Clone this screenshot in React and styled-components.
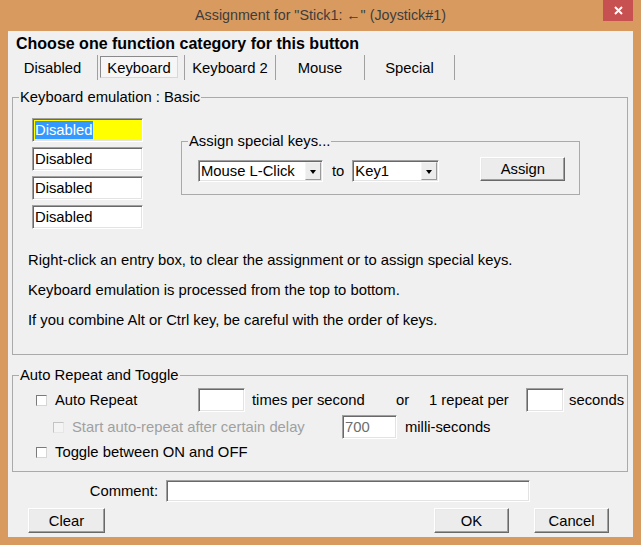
import React from "react";
import styled, { createGlobalStyle, css } from "styled-components";

const FONT = `"Liberation Sans", Arial, sans-serif`;

const GlobalStyle = createGlobalStyle`
  html, body { margin: 0; padding: 0; background: #d99a60; }
  * { box-sizing: border-box; }
`;

const sunken = css`
  border: 1px solid;
  border-color: #a0a0a0 #ffffff #ffffff #a0a0a0;
  box-shadow: inset 1px 1px 0 #696969, inset -1px -1px 0 #e3e3e3;
`;

const raised = css`
  border: 1px solid;
  border-color: #ffffff #696969 #696969 #ffffff;
  box-shadow: inset -1px -1px 0 #a0a0a0, inset 1px 1px 0 #e8e8e8;
  background: #ececec;
`;

const Window = styled.div`
  width: 641px;
  height: 545px;
  background: #d99a60;
  display: flex;
  flex-direction: column;
  padding: 0 8px 8px;
  font-family: ${FONT};
  font-size: 14.8px;
  color: #000;
`;

const TitleBar = styled.div`
  height: 31px;
  display: grid;
  grid-template-columns: 1fr auto 1fr;
  align-items: start;
`;

const Title = styled.div`
  grid-column: 2;
  line-height: 31px;
  font-size: 14.3px;
  color: #3d3d3d;
  white-space: nowrap;
`;

const CloseButton = styled.div`
  grid-column: 3;
  justify-self: end;
  width: 30px;
  height: 21px;
  background: #c75050;
  display: flex;
  align-items: center;
  justify-content: center;
`;

const Content = styled.div`
  flex: 1;
  background: #f0f0f0;
  display: flex;
  flex-direction: column;
`;

const Heading = styled.div`
  padding: 4px 0 0 8px;
  font-weight: bold;
  font-size: 16px;
  line-height: 18px;
`;

const TabRow = styled.div`
  margin-top: 2px;
  display: flex;
  height: 25px;
`;

const Tab = styled.div`
  width: ${(p) => p.$w}px;
  height: 25px;
  border-right: 1px solid #a0a0a0;
  display: flex;
  align-items: ${(p) => (p.$active ? "flex-start" : "center")};
  justify-content: ${(p) => (p.$active ? "flex-start" : "center")};
`;

const TabBox = styled.div`
  margin: 1px 0 0 2px;
  width: 78px;
  height: 22px;
  display: flex;
  align-items: center;
  justify-content: center;
  border: 1px solid;
  border-color: #8a8a8a #d8d8d8 #d8d8d8 #8a8a8a;
  background: #f6f6f6;
  padding-top: 2px;
`;

const Group = styled.fieldset`
  margin: 0;
  padding: 0;
  min-width: 0;
  border: 1px solid #aaaaaa;
`;

const Legend = styled.legend`
  padding: 0 1px;
  margin-left: 6px;
  line-height: 16px;
  font-size: 14.8px;
`;

const KeyboardGroup = styled(Group)`
  margin: 9px 5px 0 4px;
  height: 266px;
`;

const GroupBody = styled.div`
  padding: 13px 0 0 15px;
`;

const TopRow = styled.div`
  display: flex;
  align-items: flex-start;
`;

const EntryColumn = styled.div`
  margin-left: 4px;
  width: 111px;
  display: flex;
  flex-direction: column;
  gap: 5px;
`;

const EntryBox = styled.div`
  ${sunken};
  height: 24px;
  background: ${(p) => (p.$highlight ? "#ffff00" : "#ffffff")};
  display: flex;
  align-items: center;
  padding-left: 2px;
`;

const Selected = styled.span`
  background: #3399ff;
  color: #fff;
  line-height: 18px;
`;

const SpecialGroup = styled(Group)`
  margin: 15px 0 0 38px;
  width: 399px;
  height: 62px;
`;

const SpecialRow = styled.div`
  display: flex;
  align-items: flex-start;
  padding: 8px 0 0 16px;
`;

const Combo = styled.div`
  ${sunken};
  margin-top: 3px;
  width: ${(p) => p.$w}px;
  height: 22px;
  background: #fff;
  display: flex;
  align-items: center;
  justify-content: space-between;
  padding: 0 1px 0 2px;
`;

const ComboButton = styled.div`
  width: 16px;
  height: 18px;
  border: 1px solid;
  border-color: #f4f4f4 #9a9a9a #9a9a9a #f4f4f4;
  background: #ececec;
  display: flex;
  align-items: center;
  justify-content: center;
`;

const Arrow = styled.span`
  width: 0;
  height: 0;
  border-left: 3.5px solid transparent;
  border-right: 3.5px solid transparent;
  border-top: 4px solid #000;
  margin-top: 1px;
`;

const ToLabel = styled.span`
  margin: 3px 8px 0 9px;
  line-height: 22px;
`;

const Button = styled.div`
  ${raised};
  width: ${(p) => p.$w}px;
  height: ${(p) => p.$h || 24}px;
  display: flex;
  align-items: center;
  justify-content: center;
`;

const AssignButton = styled(Button)`
  margin-left: 41px;
`;

const Info = styled.div`
  margin-top: 16px;
`;

const InfoLine = styled.div`
  line-height: 30px;
`;

const AutoGroup = styled(Group)`
  margin: 12px 5px 0 4px;
  height: 105px;
`;

const AutoBody = styled.div`
  padding-left: 23px;
`;

const Row = styled.div`
  display: flex;
  align-items: center;
  height: ${(p) => p.$h}px;
  margin-top: ${(p) => p.$mt}px;
`;

const CheckCell = styled.div`
  display: flex;
  align-items: center;
  gap: 8px;
  width: ${(p) => (p.$w ? `${p.$w}px` : "auto")};
  margin-left: ${(p) => p.$ml || 0}px;
  color: ${(p) => (p.$disabled ? "#a0a0a0" : "#000")};
`;

const CheckBox = styled.span`
  width: 11px;
  height: 11px;
  flex: none;
  border: 1px solid;
  border-color: ${(p) =>
    p.$disabled ? "#c4c4c4 #e6e6e6 #e6e6e6 #c4c4c4" : "#7a7a7a #d6d6d6 #d6d6d6 #7a7a7a"};
  background: ${(p) => (p.$disabled ? "#f4f4f4" : "#fff")};
`;

const TextBox = styled.div`
  ${sunken};
  width: ${(p) => p.$w}px;
  height: ${(p) => p.$h || 24}px;
  background: #fff;
  display: flex;
  align-items: center;
  padding-left: 2px;
  color: ${(p) => (p.$disabled ? "#6d6d6d" : "#000")};
`;

const Cell = styled.span`
  width: ${(p) => (p.$w ? `${p.$w}px` : "auto")};
  margin-left: ${(p) => p.$ml || 0}px;
  flex: none;
`;

const CommentRow = styled.div`
  margin-top: 8px;
  display: flex;
  align-items: center;
  height: 22px;
`;

const CommentLabel = styled.span`
  width: 150px;
  text-align: right;
  margin-right: 8px;
`;

const ButtonRow = styled.div`
  margin-top: 6px;
  display: flex;
  padding: 0 24px 0 20px;
`;

const PushButton = styled(Button)`
  margin-left: ${(p) => (p.$auto ? "auto" : `${p.$ml || 0}px`)};
`;

function Dropdown({ w, value }) {
  return (
    <Combo $w={w}>
      <span>{value}</span>
      <ComboButton>
        <Arrow />
      </ComboButton>
    </Combo>
  );
}

export default function App() {
  return (
    <>
      <GlobalStyle />
      <Window>
        <TitleBar>
          <Title>Assignment for "Stick1: ←" (Joystick#1)</Title>
          <CloseButton>
            <svg width="9" height="9" viewBox="0 0 9 9">
              <path d="M1 1 L8 8 M8 1 L1 8" stroke="#fff" strokeWidth="2" />
            </svg>
          </CloseButton>
        </TitleBar>
        <Content>
          <Heading>Choose one function category for this button</Heading>
          <TabRow>
            <Tab $w={90}>Disabled</Tab>
            <Tab $w={87} $active>
              <TabBox>Keyboard</TabBox>
            </Tab>
            <Tab $w={91}>Keyboard 2</Tab>
            <Tab $w={89}>Mouse</Tab>
            <Tab $w={90}>Special</Tab>
          </TabRow>

          <KeyboardGroup>
            <Legend>Keyboard emulation : Basic</Legend>
            <GroupBody>
              <TopRow>
                <EntryColumn>
                  <EntryBox $highlight>
                    <Selected>Disabled</Selected>
                  </EntryBox>
                  <EntryBox>Disabled</EntryBox>
                  <EntryBox>Disabled</EntryBox>
                  <EntryBox>Disabled</EntryBox>
                </EntryColumn>
                <SpecialGroup>
                  <Legend>Assign special keys...</Legend>
                  <SpecialRow>
                    <Dropdown w={125} value="Mouse L-Click" />
                    <ToLabel>to</ToLabel>
                    <Dropdown w={87} value="Key1" />
                    <AssignButton $w={85}>Assign</AssignButton>
                  </SpecialRow>
                </SpecialGroup>
              </TopRow>
              <Info>
                <InfoLine>Right-click an entry box, to clear the assignment or to assign special keys.</InfoLine>
                <InfoLine>Keyboard emulation is processed from the top to bottom.</InfoLine>
                <InfoLine>If you combine Alt or Ctrl key, be careful with the order of keys.</InfoLine>
              </Info>
            </GroupBody>
          </KeyboardGroup>

          <AutoGroup>
            <Legend>Auto Repeat and Toggle</Legend>
            <AutoBody>
              <Row $h={24} $mt={5}>
                <CheckCell $w={162}>
                  <CheckBox />
                  <span>Auto Repeat</span>
                </CheckCell>
                <TextBox $w={47} />
                <Cell $w={144} $ml={7}>times per second</Cell>
                <Cell $w={33}>or</Cell>
                <Cell $w={97}>1 repeat per</Cell>
                <TextBox $w={38} />
                <Cell $ml={5}>seconds</Cell>
              </Row>
              <Row $h={24} $mt={3}>
                <CheckCell $w={289} $ml={17} $disabled>
                  <CheckBox $disabled />
                  <span>Start auto-repeat after certain delay</span>
                </CheckCell>
                <TextBox $w={55} $disabled>700</TextBox>
                <Cell $ml={8}>milli-seconds</Cell>
              </Row>
              <Row $h={22} $mt={2}>
                <CheckCell>
                  <CheckBox />
                  <span>Toggle between ON and OFF</span>
                </CheckCell>
              </Row>
            </AutoBody>
          </AutoGroup>

          <CommentRow>
            <CommentLabel>Comment:</CommentLabel>
            <TextBox $w={364} $h={22} />
          </CommentRow>
          <ButtonRow>
            <PushButton $w={77} $h={25}>Clear</PushButton>
            <PushButton $w={75} $h={25} $auto>OK</PushButton>
            <PushButton $w={75} $h={25} $ml={25}>Cancel</PushButton>
          </ButtonRow>
        </Content>
      </Window>
    </>
  );
}
